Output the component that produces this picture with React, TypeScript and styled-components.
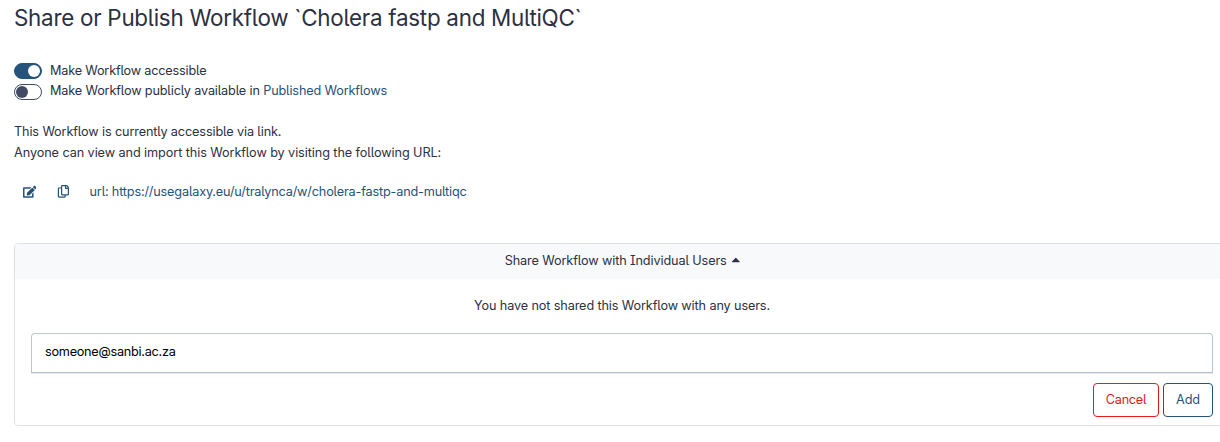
import React from "react";
import styled, { createGlobalStyle } from "styled-components";
import { FaCaretUp, FaEdit, FaRegCopy } from "react-icons/fa";

const ink = "#2c3143";
const blue = "#25537b";
const red = "#e31a1e";

const GlobalStyle = createGlobalStyle`
  * { box-sizing: border-box; }
  body {
    margin: 0;
    background: #fff;
    color: ${ink};
    font: 12.7px/20px Inter, "Noto Sans", sans-serif;
    font-feature-settings: "cv05", "cv08";
    overflow: hidden;
  }
`;

const Page = styled.main`
  width: 1230px;
  height: 442px;
  padding: 2px 0 0 14px;
`;

const Title = styled.h1`
  margin: 0;
  font-size: 22.4px;
  font-weight: 400;
  line-height: 32px;
  letter-spacing: -0.265px;
  white-space: nowrap;
`;

const Text = styled.span<{ $track?: number }>`
  letter-spacing: ${(p) => p.$track ?? 0}px;
  white-space: pre;
`;

const Switches = styled.div`
  margin-top: 27px;
`;

const SwitchRow = styled.label`
  display: flex;
  align-items: center;
  height: 20.4px;
`;

const SwitchLabel = styled(Text)`
  padding-bottom: 0.8px;
`;

const Track = styled.span<{ $on?: boolean }>`
  display: flex;
  align-items: center;
  justify-content: ${(p) => (p.$on ? "flex-end" : "flex-start")};
  width: 28px;
  height: 16px;
  margin-right: 8px;
  padding: 0 1px;
  border: 1px solid ${(p) => (p.$on ? blue : "#434a66")};
  border-radius: 8px;
  background: ${(p) => (p.$on ? blue : "#fff")};
`;

const Knob = styled.span<{ $on?: boolean }>`
  width: 12px;
  height: 12px;
  border-radius: 50%;
  background: ${(p) => (p.$on ? "#fff" : "#434a66")};
`;

const Link = styled.a`
  color: ${blue};
  text-decoration: none;
`;

const Notice = styled.div`
  margin-top: 19.2px;
  line-height: 21px;
`;

const UrlRow = styled.div`
  display: flex;
  align-items: center;
  height: 20px;
  margin-top: 19px;
  padding-left: 8px;
  color: ${blue};
`;

const IconButton = styled.span<{ $width: number; $gap: number; $size: number }>`
  display: flex;
  justify-content: center;
  width: ${(p) => p.$width}px;
  margin: 0 ${(p) => p.$gap}px 1px 0;
  font-size: ${(p) => p.$size}px;
`;

const Card = styled.section`
  height: 183px;
  margin-top: 41px;
  border: 1px solid #dee2e6;
  border-radius: 4px;
`;

const CardHeader = styled.header`
  display: flex;
  align-items: center;
  justify-content: center;
  height: 35px;
  padding: 0 0 1px 3px;
  border-radius: 3px;
  background: #f8f9fb;
  svg { margin: 0 0 2px 2px; font-size: 13.6px; }
`;

const CardBody = styled.div`
  padding: 17px 16px 0;
`;

const Empty = styled.p`
  margin: 0 0 17px;
  text-align: center;
`;

const Field = styled.div`
  height: 40px;
  padding: 8px 13px;
  border: 1px solid #bdc6d0;
  border-bottom-color: #b8c1cf;
  border-radius: 4px 4px 0 0;
  box-shadow: 0 1px 0 #e3e7ec;
  color: #000;
`;

const Actions = styled.div`
  display: flex;
  justify-content: flex-end;
  gap: 4px;
  margin-top: 10px;
`;

const Button = styled.button<{ $tone: string; $width: number }>`
  width: ${(p) => p.$width}px;
  height: 34px;
  padding: 0;
  border: 1px solid ${(p) => p.$tone};
  border-radius: 4px;
  background: #fff;
  color: ${(p) => p.$tone};
  font: inherit;
`;

export default function App() {
  return (
    <>
      <GlobalStyle />
      <Page>
        <Title>Share or Publish Workflow `Cholera fastp and MultiQC`</Title>
        <Switches>
          <SwitchRow>
            <Track $on><Knob $on /></Track>
            <SwitchLabel $track={-0.19}>Make Workflow accessible</SwitchLabel>
          </SwitchRow>
          <SwitchRow>
            <Track><Knob /></Track>
            <SwitchLabel $track={-0.155}>Make Workflow publicly available in <Link>Published Workflows</Link></SwitchLabel>
          </SwitchRow>
        </Switches>
        <Notice>
          <Text $track={-0.13}>This Workflow is currently accessible via link.</Text>
          <br />
          <Text $track={-0.09}>Anyone can view and import this Workflow by visiting the following URL:</Text>
        </Notice>
        <UrlRow>
          <IconButton $width={15} $gap={20} $size={13.6}><FaEdit /></IconButton>
          <IconButton $width={13} $gap={19.5} $size={12.8}><FaRegCopy /></IconButton>
          <Text $track={-0.17}>url: https://usegalaxy.eu/u/tralynca/w/cholera-fastp-and-multiqc</Text>
        </UrlRow>
        <Card>
          <CardHeader>
            <Text $track={-0.12}>Share Workflow with Individual Users</Text>
            <FaCaretUp />
          </CardHeader>
          <CardBody>
            <Empty><Text $track={-0.13}>You have not shared this Workflow with any users.</Text></Empty>
            <Field><Text $track={-0.26}>someone@sanbi.ac.za</Text></Field>
            <Actions>
              <Button $tone={red} $width={66}><Text $track={-0.25}>Cancel</Text></Button>
              <Button $tone={blue} $width={50}><Text $track={-0.1}>Add</Text></Button>
            </Actions>
          </CardBody>
        </Card>
      </Page>
    </>
  );
}
